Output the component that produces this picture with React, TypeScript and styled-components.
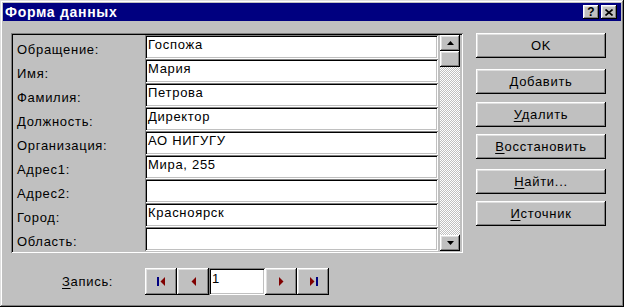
import React from 'react';
import styled, { createGlobalStyle } from 'styled-components';

const GlobalStyle = createGlobalStyle`
  html, body {
    margin: 0;
    padding: 0;
    background: #c0c0c0;
  }
  body {
    font-family: 'Liberation Sans', Arial, sans-serif;
    font-size: 13px;
    letter-spacing: 0.7px;
    color: #000;
  }
`;

const raised = `
  box-shadow: inset -1px -1px #000, inset 1px 1px #fff, inset -2px -2px #808080, inset 2px 2px #dfdfdf;
`;

const sunken = `
  box-shadow: inset 1px 1px #808080, inset -1px -1px #fff, inset 2px 2px #000, inset -2px -2px #c0c0c0;
`;

const Window = styled.div`
  box-sizing: border-box;
  width: 624px;
  height: 307px;
  padding: 3px;
  background: #c0c0c0;
  display: flex;
  flex-direction: column;
  box-shadow: inset -1px -1px #000, inset 1px 1px #dfdfdf, inset -2px -2px #808080, inset 2px 2px #fff;
`;

const TitleBar = styled.div`
  height: 18px;
  background: #000080;
  display: flex;
  align-items: center;
  padding: 0 4px 0 2px;
`;

const Title = styled.div`
  flex: 1;
  color: #fff;
  font-weight: bold;
  font-size: 14px;
  letter-spacing: 0.7px;
  line-height: 18px;
`;

const CaptionButtons = styled.div`
  display: flex;
  gap: 2px;
`;

const CaptionButton = styled.div`
  width: 16px;
  height: 14px;
  background: #c0c0c0;
  ${raised}
  display: flex;
  align-items: center;
  justify-content: center;
  font-weight: bold;
  font-size: 12px;
  letter-spacing: 0;
  line-height: 14px;
`;

const Body = styled.div`
  flex: 1;
  display: flex;
  gap: 13px;
  padding: 12px 14px 0 8px;
`;

const FormColumn = styled.div`
  width: 452px;
  display: flex;
  flex-direction: column;
`;

const RecordPanel = styled.div`
  box-sizing: border-box;
  height: 220px;
  padding: 2px;
  ${sunken}
  display: flex;
  gap: 2px;
`;

const FieldsArea = styled.div`
  flex: 1;
  display: flex;
  flex-direction: column;
`;

const FieldRow = styled.div`
  height: 24px;
  display: flex;
`;

const FieldLabel = styled.div`
  width: 132px;
  box-sizing: border-box;
  padding: 7px 0 0 4px;
  line-height: 16px;
`;

const FieldBox = styled.div`
  flex: 1;
  box-sizing: border-box;
  background: #fff;
  padding: 2px 3px;
  line-height: 16px;
  ${sunken}
`;

const ScrollBar = styled.div`
  width: 20px;
  margin-right: 1px;
  display: flex;
  flex-direction: column;
`;

const ScrollButton = styled.div`
  height: 16px;
  background: #c0c0c0;
  ${raised}
  display: flex;
  align-items: center;
  justify-content: center;
`;

const ScrollTrack = styled.div`
  flex: 1;
  background-image: conic-gradient(#fff 25%, #c0c0c0 0 50%, #fff 0 75%, #c0c0c0 0);
  background-size: 2px 2px;
`;

const NavRow = styled.div`
  margin-top: 15px;
  height: 27px;
  display: flex;
  align-items: center;
`;

const NavLabel = styled.div`
  width: 134px;
  box-sizing: border-box;
  padding-left: 51px;
`;

const NavButton = styled.div`
  box-sizing: border-box;
  width: 32px;
  height: 27px;
  background: #c0c0c0;
  ${raised}
  display: flex;
  align-items: center;
  justify-content: center;
`;

const RecordInput = styled.div`
  box-sizing: border-box;
  width: 56px;
  height: 27px;
  background: #fff;
  padding: 3px 3px;
  line-height: 16px;
  ${sunken}
`;

const ActionColumn = styled.div`
  width: 130px;
  display: flex;
  flex-direction: column;
`;

const ActionButton = styled.div<{ $gap?: number }>`
  height: 25px;
  margin-top: ${(p) => p.$gap ?? 0}px;
  background: #c0c0c0;
  ${raised}
  display: flex;
  align-items: center;
  justify-content: center;
  line-height: 16px;
`;

const Mnemonic = styled.span`
  text-decoration: underline;
  text-underline-offset: 2px;
`;

const fields: [string, string][] = [
  ['Обращение:', 'Госпожа'],
  ['Имя:', 'Мария'],
  ['Фамилия:', 'Петрова'],
  ['Должность:', 'Директор'],
  ['Организация:', 'АО НИГУГУ'],
  ['Адрес1:', 'Мира, 255'],
  ['Адрес2:', ''],
  ['Город:', 'Красноярск'],
  ['Область:', ''],
];

const actions: { key: string; rest: string; gap: number }[] = [
  { key: '', rest: 'OK', gap: 0 },
  { key: 'Д', rest: 'обавить', gap: 11 },
  { key: 'У', rest: 'далить', gap: 8 },
  { key: 'В', rest: 'осстановить', gap: 7 },
  { key: 'Н', rest: 'айти...', gap: 10 },
  { key: 'И', rest: 'сточник', gap: 7 },
];

const Arrow = ({ dir }: { dir: 'up' | 'down' }) => (
  <svg width="7" height="4" viewBox="0 0 7 4">
    <polygon points={dir === 'up' ? '3.5,0 7,4 0,4' : '0,0 7,0 3.5,4'} fill="#000" />
  </svg>
);

const NavIcon = ({ kind }: { kind: 'first' | 'prev' | 'next' | 'last' }) => {
  const left = kind === 'first' || kind === 'prev';
  const bar = kind === 'first' || kind === 'last';
  return (
    <svg width="9" height="9" viewBox="0 0 9 9">
      {left ? (
        <>
          {bar && <rect x="0" y="0" width="2" height="9" fill="#000080" />}
          <polygon points={bar ? '8,0 8,9 3.5,4.5' : '7,0 7,9 2.5,4.5'} fill="#800000" />
        </>
      ) : (
        <>
          <polygon points={bar ? '1,0 1,9 5.5,4.5' : '2,0 2,9 6.5,4.5'} fill="#800000" />
          {bar && <rect x="7" y="0" width="2" height="9" fill="#000080" />}
        </>
      )}
    </svg>
  );
};

export default function App() {
  return (
    <>
      <GlobalStyle />
      <Window>
        <TitleBar>
          <Title>Форма данных</Title>
          <CaptionButtons>
            <CaptionButton>?</CaptionButton>
            <CaptionButton>
              <svg width="8" height="7" viewBox="0 0 8 7">
                <path d="M0.5 0.5 L7.5 6.5 M7.5 0.5 L0.5 6.5" stroke="#000" strokeWidth="1.6" />
              </svg>
            </CaptionButton>
          </CaptionButtons>
        </TitleBar>
        <Body>
          <FormColumn>
            <RecordPanel>
              <FieldsArea>
                {fields.map(([label, value]) => (
                  <FieldRow key={label}>
                    <FieldLabel>{label}</FieldLabel>
                    <FieldBox>{value}</FieldBox>
                  </FieldRow>
                ))}
              </FieldsArea>
              <ScrollBar>
                <ScrollButton>
                  <Arrow dir="up" />
                </ScrollButton>
                <ScrollButton />
                <ScrollTrack />
                <ScrollButton>
                  <Arrow dir="down" />
                </ScrollButton>
              </ScrollBar>
            </RecordPanel>
            <NavRow>
              <NavLabel>
                <Mnemonic>З</Mnemonic>апись:
              </NavLabel>
              <NavButton>
                <NavIcon kind="first" />
              </NavButton>
              <NavButton>
                <NavIcon kind="prev" />
              </NavButton>
              <RecordInput>1</RecordInput>
              <NavButton>
                <NavIcon kind="next" />
              </NavButton>
              <NavButton>
                <NavIcon kind="last" />
              </NavButton>
            </NavRow>
          </FormColumn>
          <ActionColumn>
            {actions.map((a) => (
              <ActionButton key={a.rest} $gap={a.gap}>
                <span>
                  {a.key && <Mnemonic>{a.key}</Mnemonic>}
                  {a.rest}
                </span>
              </ActionButton>
            ))}
          </ActionColumn>
        </Body>
      </Window>
    </>
  );
}
